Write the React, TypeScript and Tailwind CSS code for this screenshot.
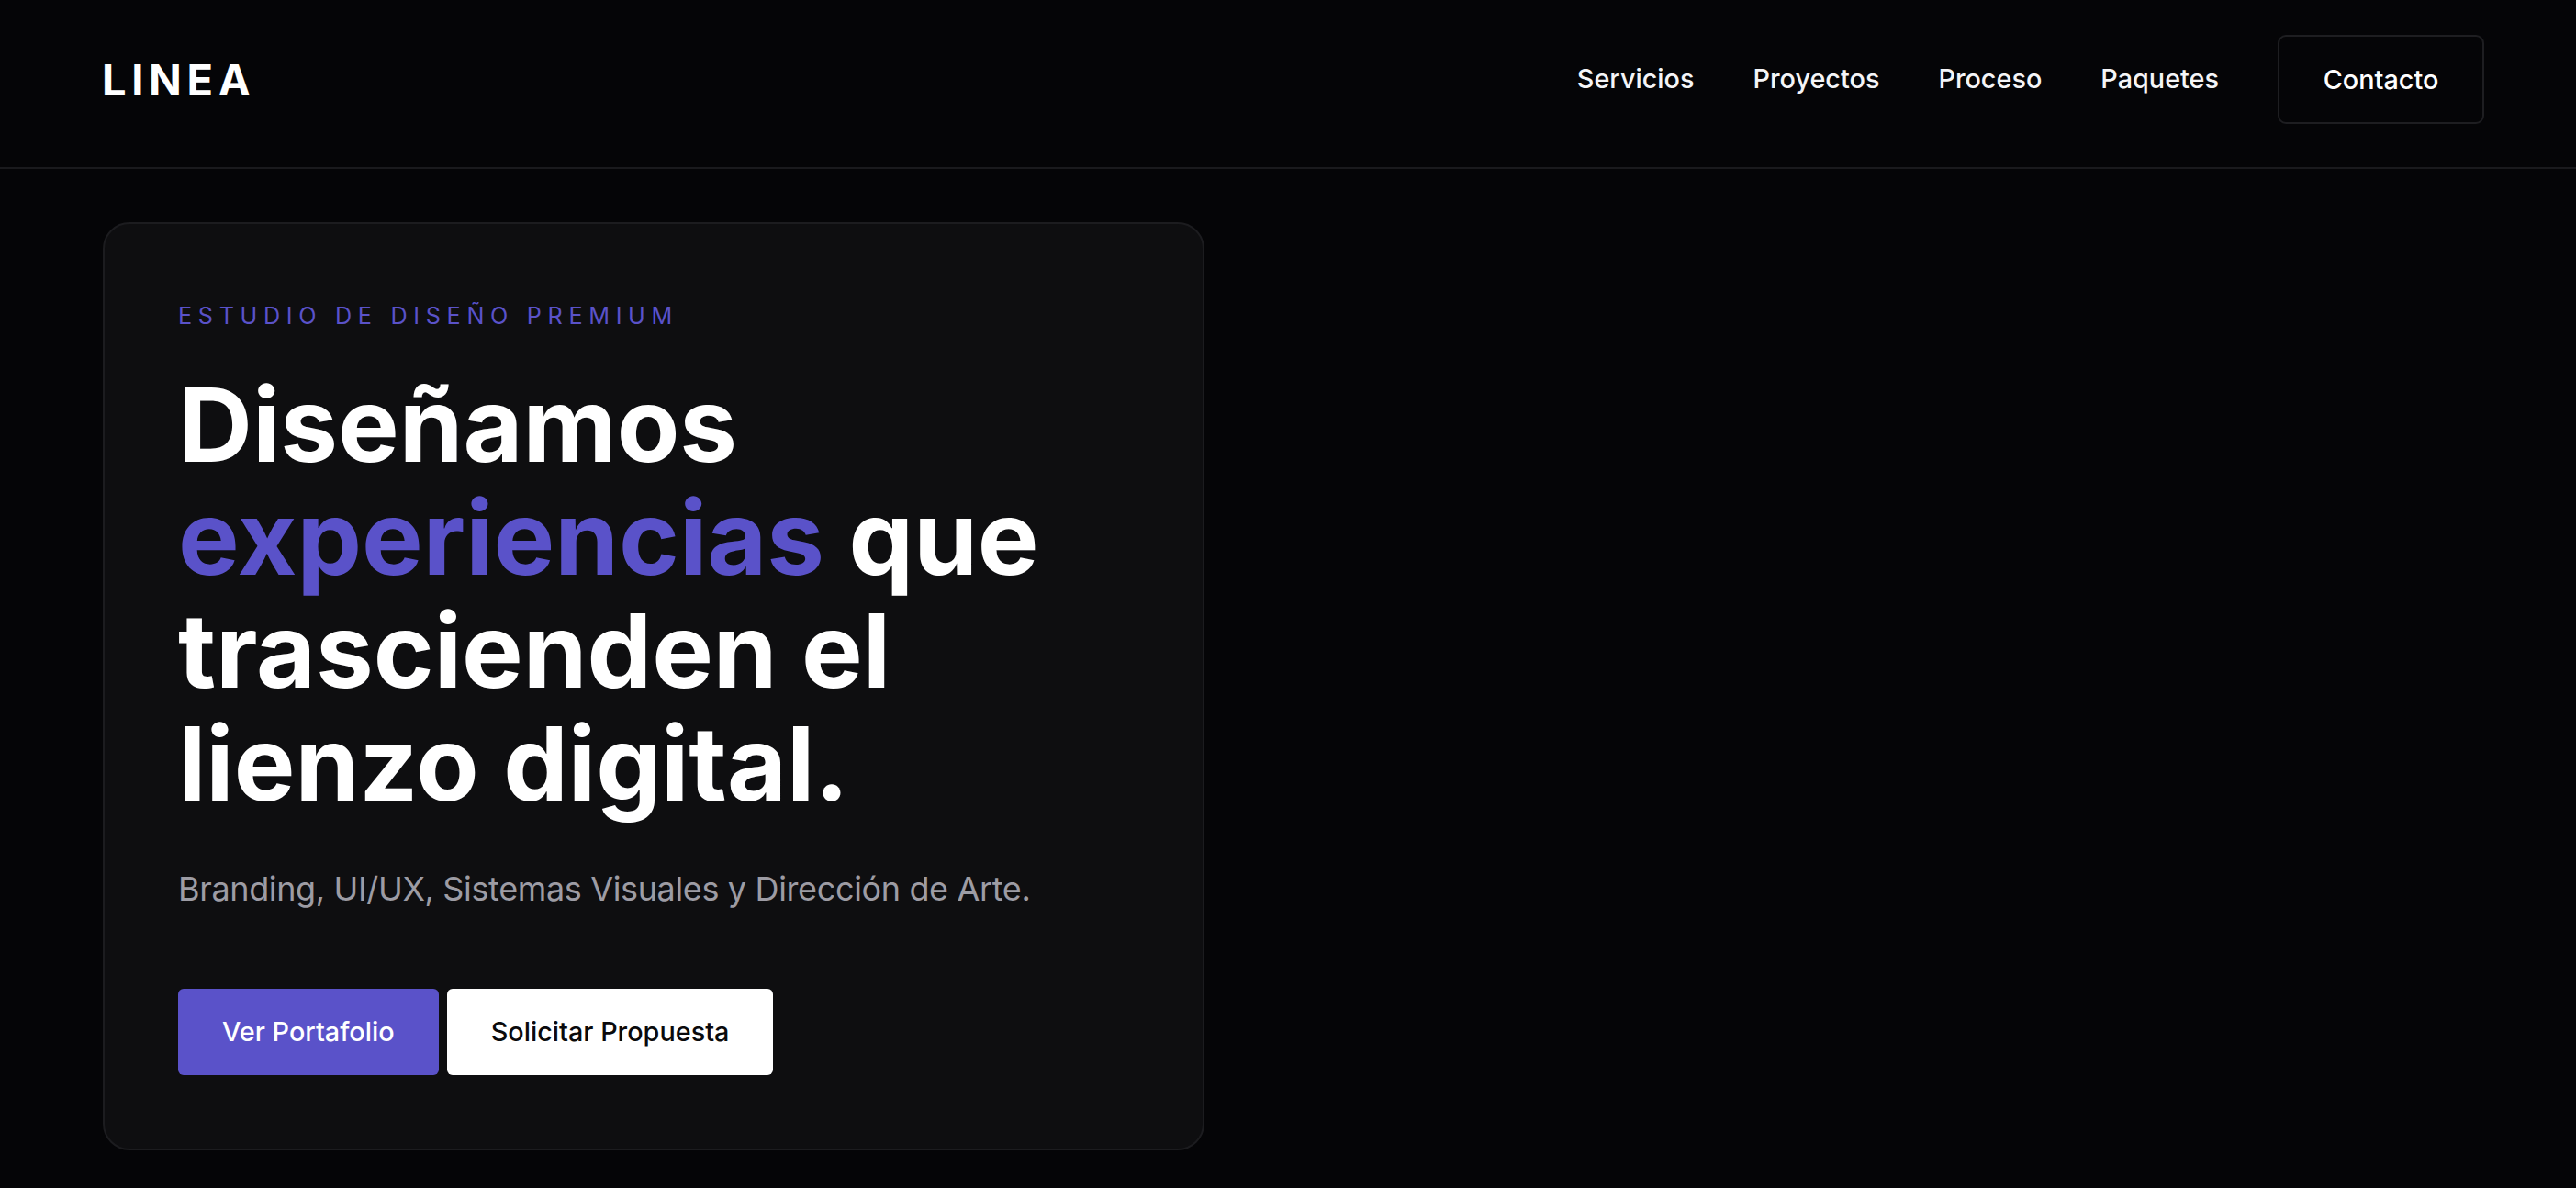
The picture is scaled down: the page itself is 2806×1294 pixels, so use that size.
const NAV_LINKS = ["Servicios", "Proyectos", "Proceso", "Paquetes"];

export default function App() {
  return (
    <div
      className="min-h-screen w-full bg-[#050507] text-white"
      style={{ fontFamily: "Inter, 'Noto Sans', sans-serif" }}
    >
      <header className="flex items-center justify-between border-b-2 border-[#1a1a1d] pl-[111px] pr-[100px] pt-[38px] pb-[47px]">
        <span className="text-[47px] font-bold leading-none tracking-[0.12em] text-white">
          LINEA
        </span>
        <nav className="flex items-center gap-[64px]">
          {NAV_LINKS.map((link) => (
            <a
              key={link}
              href="#"
              className="text-[28.8px] font-medium leading-none text-[#f5f5f7]"
            >
              {link}
            </a>
          ))}
          <button
            type="button"
            className="flex h-[97px] w-[225px] items-center justify-center rounded-[9px] border-2 border-[#1e1e21] bg-[#050507] text-[28.8px] font-medium text-white"
          >
            Contacto
          </button>
        </nav>
      </header>

      <main className="pl-[112px] pt-[58px]">
        <section className="w-[1200px] rounded-[29px] border-2 border-[#1c1c1f] bg-[#0e0e10] px-[80px] pt-[82px] pb-[80px]">
          <p className="text-[25.2px] font-normal uppercase leading-[1.5] tracking-[0.265em] text-[#5a52c9]">
            Estudio de Diseño Premium
          </p>
          <h1 className="mt-[37px] text-[112px] font-bold leading-[1.1] tracking-normal text-white">
            Diseñamos <span className="text-[#5a52c9]">experiencias</span> que
            <br />
            trascienden el
            <br />
            lienzo digital.
          </h1>
          <p className="mt-[49px] text-[36px] leading-[1.4] tracking-[-0.01em] text-[#9d9ca4]">
            Branding, UI/UX, Sistemas Visuales y Dirección de Arte.
          </p>
          <div className="mt-[84px] flex items-center gap-[9px]">
            <button
              type="button"
              className="flex h-[94px] items-center rounded-[6px] bg-[#5a52c9] px-[48px] text-[28.8px] font-medium text-white"
            >
              Ver Portafolio
            </button>
            <button
              type="button"
              className="flex h-[94px] items-center rounded-[6px] bg-white px-[48px] text-[28.8px] font-medium text-[#0a0a0c]"
            >
              Solicitar Propuesta
            </button>
          </div>
        </section>
      </main>
    </div>
  );
}
